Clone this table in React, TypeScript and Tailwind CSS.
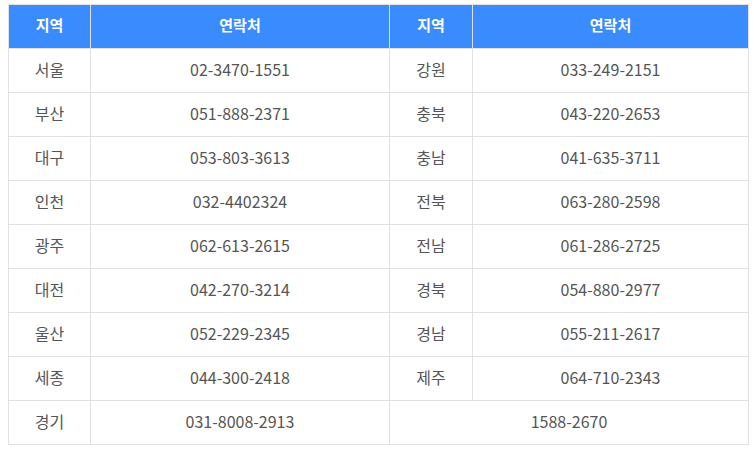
import React from "react";

const rows: [string, string, string, string][] = [
  ["서울", "02-3470-1551", "강원", "033-249-2151"],
  ["부산", "051-888-2371", "충북", "043-220-2653"],
  ["대구", "053-803-3613", "충남", "041-635-3711"],
  ["인천", "032-4402324", "전북", "063-280-2598"],
  ["광주", "062-613-2615", "전남", "061-286-2725"],
  ["대전", "042-270-3214", "경북", "054-880-2977"],
  ["울산", "052-229-2345", "경남", "055-211-2617"],
  ["세종", "044-300-2418", "제주", "064-710-2343"],
];

const td = "border border-[#e1e1e1] text-center align-middle h-[44px] p-0 pb-[4px] text-[16px]";
const th = "border border-[#e1e1e1] text-center align-middle h-[44px] p-0 pb-[3px] text-[15px] font-bold text-white bg-[#3a8bfd]";

export default function App() {
  return (
    <div
      className="w-[754px] h-[453px] bg-white pt-[4px] pl-[8px]"
      style={{ fontFamily: '"Noto Sans CJK KR", "Noto Sans", sans-serif' }}
    >
      <table className="border-collapse w-[740px] table-fixed text-[#555]">
        <colgroup>
          <col className="w-[82px]" />
          <col className="w-[299px]" />
          <col className="w-[83px]" />
          <col className="w-[276px]" />
        </colgroup>
        <thead>
          <tr>
            <th className={th}>지역</th>
            <th className={th}>연락처</th>
            <th className={th}>지역</th>
            <th className={th}>연락처</th>
          </tr>
        </thead>
        <tbody>
          {rows.map((r) => (
            <tr key={r[0]}>
              <td className={td}>{r[0]}</td>
              <td className={td}>{r[1]}</td>
              <td className={td}>{r[2]}</td>
              <td className={td}>{r[3]}</td>
            </tr>
          ))}
          <tr>
            <td className={td}>경기</td>
            <td className={td}>031-8008-2913</td>
            <td className={td} colSpan={2}>1588-2670</td>
          </tr>
        </tbody>
      </table>
    </div>
  );
}
